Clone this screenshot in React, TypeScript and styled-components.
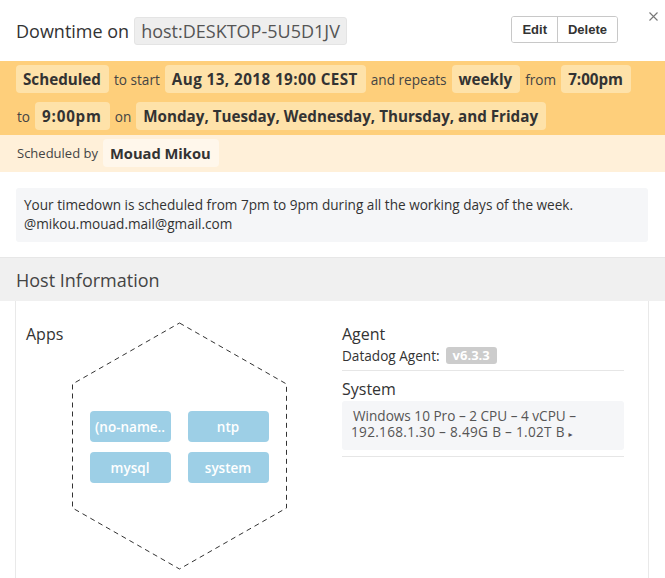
import React from "react";
import styled, { createGlobalStyle } from "styled-components";

const GlobalStyle = createGlobalStyle`
  html, body { margin: 0; padding: 0; background: #fff; }
  body {
    font-family: "Open Sans", "DejaVu Sans", sans-serif;
    color: #333;
    -webkit-font-smoothing: antialiased;
  }
  * { box-sizing: border-box; }
`;

const Page = styled.div`
  position: relative;
  width: 665px;
  overflow: hidden;
`;

/* ---------- header ---------- */
const Header = styled.header`
  display: flex;
  align-items: center;
  height: 61px;
  padding: 0 47px 0 16px;
`;

const Title = styled.h1`
  display: flex;
  align-items: center;
  gap: 5px;
  margin: 0;
  flex: 1;
  font-size: 18px;
  font-weight: 400;
  color: #333;
  white-space: nowrap;
`;

const HostTag = styled.span`
  display: inline-flex;
  align-items: center;
  height: 28px;
  padding: 0 6px;
  background: #eeeeee;
  border: 1px solid #e4e4e4;
  border-radius: 3px;
  color: #555;
`;

const ButtonGroup = styled.div`
  display: flex;
  border: 1px solid #c8c8c8;
  border-radius: 3px;
  overflow: hidden;
  margin-top: -2px;
`;

const GroupButton = styled.button<{ $first?: boolean }>`
  height: 25px;
  padding: 0 10px;
  border: 0;
  border-left: ${(p) => (p.$first ? "0" : "1px solid #c8c8c8")};
  background: #fff;
  font-family: "Liberation Sans", Arial, sans-serif;
  font-size: 13px;
  font-weight: 700;
  color: #333;
  cursor: pointer;
`;

const Close = styled.button`
  position: absolute;
  top: 10px;
  right: 6px;
  width: 12px;
  height: 12px;
  padding: 0;
  border: 0;
  background: transparent;
  display: grid;
  place-items: center;
  cursor: pointer;
`;

/* ---------- schedule bands ---------- */
const ScheduleBand = styled.section`
  display: flex;
  flex-direction: column;
  gap: 9px;
  padding: 4px 16px 5px;
  background: #fecf7b;
`;

const Line = styled.div`
  display: flex;
  align-items: center;
  gap: 4px;
  height: 28px;
  white-space: nowrap;
`;

const Word = styled.span<{ $plain?: boolean }>`
  font-size: ${(p) => (p.$plain ? 13 : 13.6)}px;
  color: #444;
  padding: 0 1px;
`;

const Chip = styled.span<{ $bg: string; $size?: number; $track?: number }>`
  display: inline-flex;
  align-items: center;
  height: 28px;
  padding: 0 8px 0 7px;
  border-radius: 4px;
  background: ${(p) => p.$bg};
  font-size: ${(p) => p.$size || 15.2}px;
  letter-spacing: ${(p) => p.$track || 0}px;
  font-weight: 700;
  color: #333;
`;

const ByBand = styled.section`
  display: flex;
  align-items: center;
  gap: 4px;
  padding: 4px 16px 5px;
  background: #fff0d9;
  height: 37px;
`;

/* ---------- message ---------- */
const Message = styled.div`
  margin: 16px 17px 15px 16px;
  padding: 7px 8px 9px;
  background: #f5f6f8;
  border-radius: 3px;
  font-size: 13.6px;
  line-height: 19px;
  color: #333;
`;

/* ---------- host information ---------- */
const HostHeader = styled.h2`
  margin: 0;
  height: 44px;
  padding: 0 16px;
  display: flex;
  align-items: center;
  border-top: 1px solid #e7e7e7;
  background: #f0f0f0;
  font-size: 18px;
  font-weight: 400;
  color: #444;
`;

const Panel = styled.section`
  margin: 0 16px 0 15px;
  border-left: 1px solid #e9e9e9;
  border-right: 1px solid #e9e9e9;
  display: grid;
  grid-template-columns: 326px 1fr;
  padding-top: 21px;
  padding-bottom: 24px;
`;

const AppsColumn = styled.div`
  display: grid;
`;

const SectionTitle = styled.h3`
  margin: 0;
  font-size: 16px;
  line-height: 24px;
  font-weight: 400;
  color: #333;
`;

const AppsTitle = styled(SectionTitle)`
  grid-area: 1 / 1;
  align-self: start;
  padding-left: 10px;
`;

const Hex = styled.div`
  grid-area: 1 / 1;
  justify-self: center;
  display: grid;
  width: 217px;
  height: 248px;
`;

const HexShape = styled.svg`
  grid-area: 1 / 1;
`;

const Tiles = styled.div`
  grid-area: 1 / 1;
  align-self: center;
  justify-self: center;
  display: grid;
  grid-template-columns: 81px 81px;
  grid-auto-rows: 31px;
  column-gap: 17px;
  row-gap: 10px;
  margin-top: 2px;
`;

const Tile = styled.div`
  display: grid;
  place-items: center;
  background: #9dcfe6;
  border-radius: 4px;
  color: #fff;
  font-size: 13.5px;
  font-weight: 600;
  white-space: nowrap;
`;

const InfoColumn = styled.div`
  display: flex;
  flex-direction: column;
  padding-right: 24px;
`;

const InfoBlock = styled.div<{ $top?: number }>`
  padding-top: ${(p) => p.$top || 0}px;
  padding-bottom: 6px;
  border-bottom: 1px solid #e6e6e6;
`;

const AgentRow = styled.div`
  display: flex;
  align-items: center;
  gap: 6px;
  height: 18px;
  font-size: 13.6px;
  color: #333;
`;

const Badge = styled.span`
  display: inline-flex;
  align-items: center;
  height: 17px;
  padding: 0 7px;
  border-radius: 3px;
  background: #cccccc;
  color: #fff;
  font-size: 13px;
  font-weight: 700;
`;

const SystemBox = styled.div`
  padding: 7px 9px 8px;
  background: #f5f6f8;
  border-radius: 3px;
  font-size: 13.6px;
  line-height: 16px;
  color: #555;
`;

const SystemLine = styled.div<{ $indent?: number; $track?: number }>`
  padding-left: ${(p) => p.$indent || 0}px;
  letter-spacing: ${(p) => p.$track || 0}px;
  white-space: nowrap;
`;

const Caret = styled.span`
  font-size: 8px;
  letter-spacing: 0;
`;

export default function App() {
  const apps = ["(no-name..", "ntp", "mysql", "system"];
  const chipBg = "#fee2a9";
  return (
    <Page>
      <GlobalStyle />
      <Header>
        <Title>
          Downtime on <HostTag>host:DESKTOP-5U5D1JV</HostTag>
        </Title>
        <ButtonGroup>
          <GroupButton $first>Edit</GroupButton>
          <GroupButton>Delete</GroupButton>
        </ButtonGroup>
      </Header>
      <Close aria-label="Close">
        <svg width="9" height="9" viewBox="0 0 9 9">
          <path d="M0.5 0.5 L8.5 8.5 M8.5 0.5 L0.5 8.5" stroke="#777" strokeWidth="1.1" />
        </svg>
      </Close>

      <ScheduleBand>
        <Line>
          <Chip $bg={chipBg}>Scheduled</Chip>
          <Word>to start</Word>
          <Chip $bg={chipBg} $track={0.45}>Aug 13, 2018 19:00 CEST</Chip>
          <Word>and repeats</Word>
          <Chip $bg={chipBg}>weekly</Chip>
          <Word>from</Word>
          <Chip $bg={chipBg}>7:00pm</Chip>
        </Line>
        <Line>
          <Word>to</Word>
          <Chip $bg={chipBg} $track={0.8}>9:00pm</Chip>
          <Word>on</Word>
          <Chip $bg={chipBg}>Monday, Tuesday, Wednesday, Thursday, and Friday</Chip>
        </Line>
      </ScheduleBand>
      <ByBand>
        <Word $plain>Scheduled by</Word>
        <Chip $bg="#fff7eb" $size={14.7}>Mouad Mikou</Chip>
      </ByBand>

      <Message>
        Your timedown is scheduled from 7pm to 9pm during all the working days of the week.
        <br />
        @mikou.mouad.mail@gmail.com
      </Message>

      <HostHeader>Host Information</HostHeader>
      <Panel>
        <AppsColumn>
          <AppsTitle>Apps</AppsTitle>
          <Hex>
            <HexShape width="217" height="248" viewBox="0 0 217 248">
              <polygon
                points="108.5,1 215.5,62 215.5,186 108.5,247 1.5,186 1.5,62"
                fill="none"
                stroke="#333"
                strokeWidth="1"
                strokeDasharray="5 4"
              />
            </HexShape>
            <Tiles>
              {apps.map((a) => (
                <Tile key={a}>{a}</Tile>
              ))}
            </Tiles>
          </Hex>
        </AppsColumn>
        <InfoColumn>
          <InfoBlock>
            <SectionTitle>Agent</SectionTitle>
            <AgentRow>
              Datadog Agent: <Badge>v6.3.3</Badge>
            </AgentRow>
          </InfoBlock>
          <InfoBlock $top={6}>
            <SectionTitle>System</SectionTitle>
            <SystemBox>
              <SystemLine $indent={2}>Windows 10 Pro – 2 CPU – 4 vCPU –</SystemLine>
              <SystemLine $track={0.3}>
                192.168.1.30 – 8.49G B – 1.02T B <Caret>▸</Caret>
              </SystemLine>
            </SystemBox>
          </InfoBlock>
        </InfoColumn>
      </Panel>
    </Page>
  );
}
